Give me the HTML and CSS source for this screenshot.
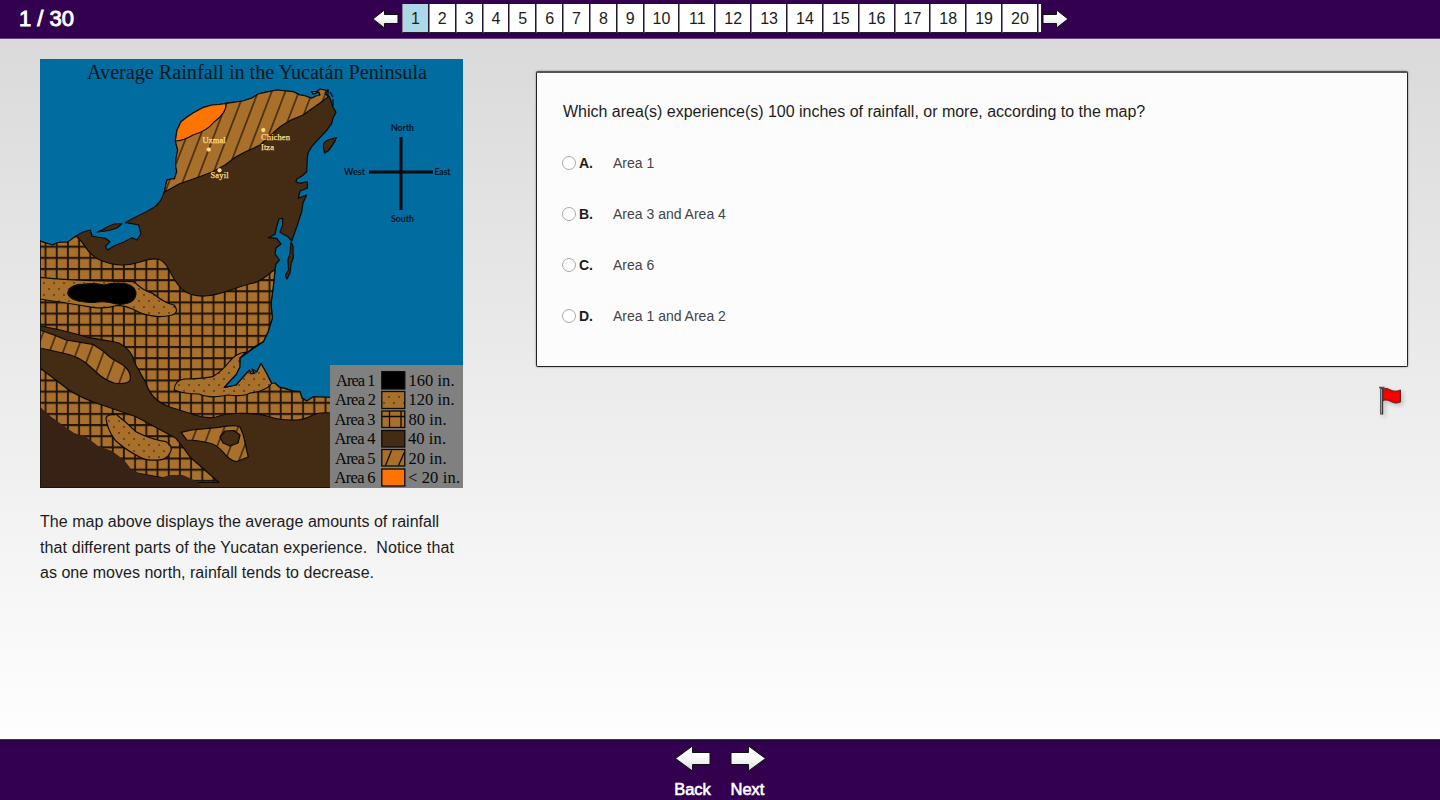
FILE: index.html
```html
<!DOCTYPE html>
<html lang="en">
<head>
<meta charset="utf-8">
<title>Practice Test</title>
<link rel="stylesheet" href="styles.css">
</head>
<body>
<header class="topbar">
  <div class="counter">1 / 30</div>
  <nav class="pager">
    <svg class="pager-arrow" width="27" height="20" viewBox="0 0 27 20"><path class="arrow" d="M1 10 12.500 1V5.500H26V14.500H12.500V19Z"/></svg>
    <ol class="pages">
      <li class="current">1</li><li>2</li><li>3</li><li>4</li><li>5</li><li>6</li><li>7</li><li>8</li><li>9</li>
      <li class="wide">10</li><li class="wide">11</li><li class="wide">12</li><li class="wide">13</li><li class="wide">14</li><li class="wide">15</li><li class="wide">16</li><li class="wide">17</li><li class="wide">18</li><li class="wide">19</li><li class="wide">20</li>
      <li class="sliver"></li>
    </ol>
    <svg class="pager-arrow" width="27" height="20" viewBox="0 0 27 20"><path class="arrow" d="M26 10 14.500 1V5.500H1V14.500H14.500V19Z"/></svg>
  </nav>
</header>

<main class="content">
  <section class="passage">
    <svg class="map" width="423" height="429" viewBox="40 59 423 429">
      <defs>
        <linearGradient id="arrowFill" x1="0" y1="0" x2="0" y2="1"><stop offset="0.4" stop-color="#fff"/><stop offset="1" stop-color="#d8d8d8"/></linearGradient>
        <pattern id="grid" x="40" y="241" width="11.2" height="11.15" patternUnits="userSpaceOnUse">
          <rect width="12" height="12" fill="#a9702b"/><path d="M5.500 0V12M0 5.700H12" stroke="#21150a" stroke-width="1.9"/>
        </pattern>
        <pattern id="dots" x="42" y="280" width="10" height="12" patternUnits="userSpaceOnUse">
          <rect width="10" height="12" fill="#a9702b"/><circle cx="2" cy="3" r=".8" fill="#21150a"/><circle cx="7" cy="9" r=".8" fill="#21150a"/>
        </pattern>
        <pattern id="stripes" x="272.900" y="0" width="13.600" height="20" patternUnits="userSpaceOnUse" patternTransform="skewX(-21)">
          <rect width="14" height="20" fill="#a9702b"/><path d="M6.800 0V20" stroke="#21150a" stroke-width="1.3"/>
        </pattern>
      </defs>
      <rect x="40" y="59" width="423" height="429" fill="#006c9f"/>
      <g stroke="#0b0a08" stroke-width="1.2" stroke-linejoin="round">
        <path fill="#432b14" d="M40 241 46 243 52.700 245 58 242.500 67.700 242 72 239 76 236 83 232 90.300 230 92 236 97 237 105.300 238.300 110 241.700 105.300 246.700 107.700 250 114.300 245.700 124 242 132 237.700 137 240 141 233.300 138.700 225 131 223.500 125.300 222.700 130 220 136 216.700 146 212 156 206 161 200 164.300 192.300 166 184 167 180 171 179 174.300 179 176.700 171.700 175.500 165 176 158.300 177.700 150 175.300 141 177 130 181 121.700 187 117 193 113 202.700 107.700 212 105 219 104.500 226 103.300 234 102 242.700 101 252 98 258 94 265 92.300 276.700 90 284 91 293.300 91.700 300 95 305 95.700 311.700 98.300 316 96 320 95 319 92 313 94 311.700 91.700 317 91.500 320 89 328.300 91 325 93 329.300 96.700 331 101 333 107 336 112.300 333 118 331.700 123.300 327 130 321.700 135.700 311.700 146.700 308 153 307.300 158.300 306.700 171.700 302 176 296.700 179 296 182 300 183.300 307.300 181.700 307.300 188.300 300 191 298.300 198.300 306.700 195 303 203 301.700 211.700 297 226 291.700 241 288 236.700 283 234 280 232 282.700 225 282.700 218.300 279 219 276.700 226.700 275 234.300 268.300 237.700 276.700 238.300 281 244 276 248 275 254 279.500 260 276 264 275 270 273.300 286.700 271 303.300 272.300 318.300 268 332 263.300 341.700 254 347 247 353 240 358 240 367 236 375 230 381 224.300 387.300 236 385 242 378 249.300 370 254.300 373.300 256.700 371.700 261 363.300 266.700 373.300 271.700 383.300 275 383 279 387 285 388.300 293 391 300 391.700 302 398 306.700 401 313.300 396.700 321 398 332 397.300V488H40Z"/>
        <path fill="url(#stripes)" d="M164.300 192.300 166 184 167 180 171 179 174.300 179 176.700 171.700 175.500 165 176 158.300 177.700 150 175.300 141 181 121.700 202.700 107.700 226 103.300 242.700 101 252 98 258 94 265 92.300 276.700 90 293.300 91.700 300 95 305 95.700 311.700 98.300 316 96 320 95 319 92 313 94 311.700 91.700 317 91.500 320 89 328.300 91 325 93 328 97 320 103 303 115 291 120 280 126.700 260 145 254 148 245 152 236 156.700 225 165 212.700 171.700 196 178 179 184Z"/>
        <path fill="#ff7300" d="M175.300 141 177 130 181 121.700 187 117 193 113 202.700 107.700 212 105 219 104.500 226 103.300Q227 113 214 122Q207 131 193 135Q183 141 175.300 141Z"/>
        <path fill="url(#grid)" d="M76 236C86 244 86 253 98 259S125 267 140 262 161 258 166 265C175 278 178 297 205 296 224 295 237 286 254 283 266 279 269 272 275 270L273.300 286.700 271 303.300 272.300 318.300 268 332 263.300 341.700 247 353 240 358 240 367 261 363 271.700 383.300 275 383 279 387 293 391 300 391.700 302 398 306.700 401 313.300 396.700 332 397.300V413Q319 412 313 415Q302 421 291.700 420 278 420 267 416 256 413 236 413.500 224 414 216 417Q207 419 195 415L169 406.700Q151 400 146 383L134 361.700Q133 351 119 343 110 341 89 337.700 64 330 40 326V241L46 243 52.700 245 58 242.500 67.700 242Z"/>
        <path fill="url(#grid)" d="M40 368Q48 374 61 384 74 395 92.700 401.700L136 416.700 176 438.300Q184 448 190 457L219 482.500H190L120 470 40 420Z"/>
        <path fill="url(#dots)" d="M40 277.300Q65 280 102.700 281L134 281.700Q143 291 152.700 293.300 164 303 174 305 180 312 172 315 161 318 151 315.700 141 314 132.700 309 123 305 116 305.700 105 309 92.700 307.300 60 302 40 299Z"/>
        <path fill="#000" d="M67.700 293.300Q69 284 85 284Q94 283 104 285Q115 282 127 284Q136 287 136 294Q135 303 124 304Q117 305 110 302.500Q102 301 94 302.500Q70 302 67.700 293.300Z"/>
        <path fill="url(#stripes)" d="M40 330 54 335 66 340 92.700 344.300 103 351 111 358 123 365Q132 372 130 380Q127 385 114 383Q104 380 95 371L86 363Q77 356 62.700 353L40 348Z"/>
        <path fill="url(#dots)" d="M174.300 390Q174 381 184 379 201 379 212.700 376.700 222 371 229 362 236 353 246 352L240 358V367L236 375 224.300 387.300 236 385 249.300 370 254.300 373.300 256.700 371.700 261 363.300 266.700 373.300 271.700 383.300Q267 391 250 393 243 397 228 395 210 399 199 394 184 394 174.300 390Z"/>
        <path fill="#006c9f" stroke="none" d="M240.600 358 254 349 270 339 275 340V382L271.700 383 261 363.300 256.700 371.700 254.300 373.300 249.300 370 236 385 224.300 387.300 236 375 240 367Z"/>
        <path fill="none" d="M263.300 341.700 254 347 247 353 240 358 240 367 236 375 230 381 224.300 387.300 236 385 242 378 249.300 370 251 374 254.300 373.300 252 369 256.700 371.700 261 363.300 266.700 373.300 271.700 383.300"/>
        <path fill="url(#dots)" d="M106 418Q107 414 116 414.300 126 422 136 431.700 150 439 166 441.700 174 446 170 453Q166 461 155 460 145 461 136 455 123 448 115 440 107 429 106 418Z"/>
        <path fill="url(#stripes)" d="M181 432.300 192 430 219 427.300Q235 424 240 427L243.300 435 248.300 457 236 461.700Q229 460 222.700 451.700 216 444 209 443 197 440 187 440Z"/>
        <path fill="#432b14" d="M220 437 225 431 234 430.500 240 435 238 443 230 446 223 443Z"/>
        <path fill="#432b14" d="M97 232 103 229.500 107 227 114 224 122 223.500 117 228 109 230.500ZM323.500 147Q323 142 328 140L336.500 137.500Q334 144 328 151L324.500 153ZM291 242 293 246V253L293.500 257 291 264 290 273 287 279 285.500 275 288.500 270 288 260 290 253Z"/>
        <path fill="none" d="M328 89V95M333 99V106M330 92 333 97"/>
      </g>
      <path fill="#382216" d="M40 406.700 50 416 62.700 425 74 433 86 436.700 98 446 112 451 124 460 131 469 143 475 159 478 171 475 182.700 475 192 479 201 485V488H40Z"/>
      <path d="M40.500 240V488M40 487.500H330" stroke="#111" stroke-width="1" opacity=".7"/>
      <path d="M401 137V210M369 172H433" stroke="#050b10" stroke-width="3"/>
      <g class="compass">
        <text x="391" y="131" textLength="23" lengthAdjust="spacingAndGlyphs">North</text><text x="391" y="222" textLength="23" lengthAdjust="spacingAndGlyphs">South</text>
        <text x="344" y="174.500" textLength="21" lengthAdjust="spacingAndGlyphs">West</text><text x="434.500" y="174.500" textLength="16" lengthAdjust="spacingAndGlyphs">East</text>
      </g>
      <text class="map-title" x="87" y="79" textLength="340" lengthAdjust="spacingAndGlyphs">Average Rainfall in the Yucatán Peninsula</text>
      <g class="city">
        <text x="202.500" y="143" textLength="23">Uxmal</text><text x="210.500" y="178" textLength="18">Sayil</text>
        <text x="261" y="140" textLength="29">Chichen</text><text x="261" y="150" textLength="13">Itza</text>
        <circle cx="208.700" cy="149.500" r="2"/><circle cx="219.500" cy="170.300" r="2"/><circle cx="263.300" cy="130" r="2"/>
      </g>
      <rect x="330" y="365" width="133" height="123" fill="#808080"/>
      <g class="legend">
        <text x="336" y="385.500" textLength="39.500">Area 1</text><text x="408.500" y="385.500" textLength="46">160 in.</text>
        <text x="335" y="405" textLength="41">Area 2</text><text x="408.500" y="405" textLength="46">120 in.</text>
        <text x="334.500" y="424.500" textLength="41">Area 3</text><text x="408.500" y="424.500" textLength="38">80 in.</text>
        <text x="334.500" y="443.500" textLength="41">Area 4</text><text x="408" y="443.500" textLength="38">40 in.</text>
        <text x="335" y="463.500" textLength="40.500">Area 5</text><text x="408.500" y="463.500" textLength="38">20 in.</text>
        <text x="334.500" y="482.500" textLength="41">Area 6</text><text x="408" y="482.500" textLength="52">&lt; 20 in.</text>
      </g>
      <g stroke="#0b0a08" stroke-width="1.300">
        <rect x="381.800" y="371.700" width="23" height="17.300" fill="#000"/>
        <rect x="381.800" y="391.500" width="23" height="17" fill="url(#dots)"/>
        <rect x="381.800" y="411" width="23" height="16.500" fill="#a9702b"/><path d="M389.500 411V427.500M401 411V427.500M382 416.500H405"/>
        <rect x="381.800" y="430.500" width="23" height="16.500" fill="#432b14"/>
        <rect x="381.800" y="449.500" width="23" height="16.500" fill="#a9702b"/><path d="M385.500 465.500 391.500 450.500M398.500 465.500 404.500 452"/>
        <rect x="381.800" y="469" width="23" height="17" fill="#ff7300"/>
      </g>
    </svg>
    <p class="caption"><span>The map above displays the average amounts of rainfall</span><br><span class="loose">that different parts of the Yucatan experience.&nbsp; Notice that</span><br><span>as one moves north, rainfall tends to decrease.</span></p>
  </section>

  <section class="question-side">
    <div class="card">
      <p class="question">Which area(s) experience(s) 100 inches of rainfall, or more, according to the map?</p>
      <div class="option"><span class="radio"></span><b>A.</b><span class="answer">Area 1</span></div>
      <div class="option"><span class="radio"></span><b>B.</b><span class="answer">Area 3 and Area 4</span></div>
      <div class="option"><span class="radio"></span><b>C.</b><span class="answer">Area 6</span></div>
      <div class="option"><span class="radio"></span><b>D.</b><span class="answer">Area 1 and Area 2</span></div>
    </div>
    <svg class="flag" width="28" height="32" viewBox="0 0 28 32">
      <path d="M3.500 4C10 1 12 9 21.500 5V17C13 21 10 12 3.500 16Z" fill="#e60000" stroke="#6b2020" stroke-width="1"/>
      <path d="M5 5.500C10 4 12 10 20 7V15C13 18 10 11 5 13.500Z" fill="#fb0000"/>
      <path d="M2.700 2V29.500" stroke="#393939" stroke-width="3"/><path d="M2.500 4V28.500" stroke="#999" stroke-width="1"/>
      <path d="M0 2.500H5.500" stroke="#555" stroke-width="1.500"/>
    </svg>
  </section>
</main>

<footer class="bottombar">
  <div class="nav-item"><svg width="36" height="27" viewBox="0 0 36 27"><path class="arrow" d="M.5 13.500 17.500 1V7.500H35V19.500H17.500V26Z"/></svg><span class="nav-label">Back</span></div>
  <div class="nav-item"><svg width="36" height="27" viewBox="0 0 36 27"><path class="arrow" d="M35.500 13.500 18.500 1V7.500H1V19.500H18.500V26Z"/></svg><span class="nav-label">Next</span></div>
</footer>
</body>
</html>
```
FILE: styles.css
```css
* { box-sizing: border-box; }
body {
  margin: 0;
  height: 800px;
  display: flex;
  flex-direction: column;
  overflow: hidden;
  font-family: "Liberation Sans", Arial, sans-serif;
  color: #1c1c1c;
}
svg { display: block; flex: none; }
.topbar {
  height: 39px;
  flex: none;
  display: flex;
  background: #33004f;
  border-bottom: 1px solid #66447b;
}
.counter {
  width: 372px;
  padding-left: 19px;
  line-height: 38px;
  font-size: 22px;
  color: #fff;
  -webkit-text-stroke: 0.9px #fff;
}
.pager { display: flex; align-items: flex-start; }
.pager-arrow { margin-top: 9px; }
.arrow { fill: url(#arrowFill); stroke: #111; stroke-width: 1; stroke-linejoin: round; }
.pages {
  list-style: none;
  display: flex;
  margin: 4px 0 0 3px;
  padding: 0;
  height: 29px;
  font-size: 16px;
}
.pages li {
  width: 26.850px;
  height: 29px;
  line-height: 30px;
  text-align: center;
  background: #fff;
  border: solid #241733;
  border-width: 0 1px 1px 1px;
  border-left-color: #8c8398;
}
.pages li.wide { width: 35.850px; }
.pages li.current { background: #add8e6; }
.pages li.sliver { width: 4px; }
.content {
  height: 700px;
  flex: none;
  display: flex;
  padding-left: 40px;
  background: linear-gradient(#dadada, #fefefe);
}
.passage { width: 496px; padding-top: 20px; }
.caption {
  margin: 21px 0 0;
  font-size: 16px;
  line-height: 25.500px;
  letter-spacing: .03px;
  white-space: nowrap;
}
.caption .loose { letter-spacing: .105px; }
.map-title { font: 20px "Liberation Serif", serif; fill: #071722; }
.compass { font: bold 9px Lato, sans-serif; fill: #04151f; }
.city { font: 8.500px "Liberation Serif", serif; fill: #ffdf86; stroke: #ffdf86; stroke-width: .25px; }
.legend { font: 16.500px "Liberation Serif", serif; fill: #080808; }
.question-side { width: 872px; padding-top: 32px; }
.card {
  height: 296px;
  padding: 28px 25px 0;
  background: #fcfcfc;
  border: 1px solid #222;
  border-top: 2px solid #555;
  border-radius: 2px;
  box-shadow: 0 0 2px #777;
}
.question { margin: 0 0 29px 1px; font-size: 16px; line-height: 22px; letter-spacing: -.015px; white-space: nowrap; }
.option { display: flex; align-items: center; height: 22px; margin-bottom: 29px; font-size: 14px; }
.radio { width: 14px; height: 14px; border: 1px solid #aaa; border-radius: 50%; background: #fff; }
.option b { width: 34px; margin-left: 3px; font-size: 14px; }
.answer { color: #444; }
.flag { margin: 18px 0 0 843px; filter: drop-shadow(2px 2px 2px rgba(0, 0, 0, .2)); }
.bottombar {
  height: 61px;
  flex: none;
  display: flex;
  justify-content: center;
  gap: 19px;
  background: #33004f;
  border-top: 1px solid #870c88;
  box-shadow: inset 0 1px #170838;
  padding-top: 5px;
}
.nav-item { display: flex; flex-direction: column; align-items: center; width: 36px; }
.nav-label {
  margin-top: 7px;
  line-height: 20px;
  font-size: 16.500px;
  color: #fff;
  -webkit-text-stroke: 0.6px #fff;
}
```
